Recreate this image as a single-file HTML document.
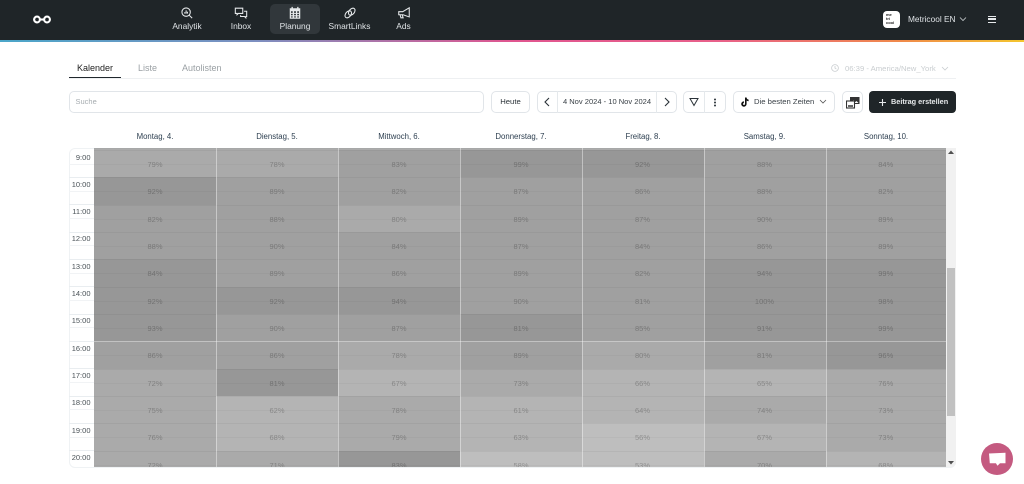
<!DOCTYPE html>
<html lang="de"><head><meta charset="utf-8"><title>Planung</title>
<style>
*{box-sizing:border-box}
html,body{margin:0;padding:0;width:1024px;height:484px;overflow:hidden;background:#fff;font-family:"Liberation Sans",sans-serif;color:#20272c}
.a{position:absolute}
#hd{left:0;top:0;width:1024px;height:40px;background:#1f2528}
#gr{left:0;top:40px;width:1024px;height:1.5px;background:linear-gradient(90deg,#4ba6c9 0%,#7d8fc0 25%,#e0558f 50%,#e8608a 70%,#f08a4a 88%,#f4c62e 100%)}
.nav{top:0;height:40px;text-align:center;color:#dfe3e6;font-size:8.4px}
.nav svg{position:absolute;top:5.5px;left:50%;margin-left:-7px;width:14px;height:14px;fill:none;stroke:#e6e9eb;stroke-width:1.2}
.nav span{position:absolute;left:-20px;right:-20px;top:21px;line-height:10px}
.btn{top:91px;height:21.5px;border:1px solid #e1e5e9;border-radius:5px;background:#fff;font-size:7.7px;line-height:19.5px;text-align:center;color:#2a3238}
.sep{top:91px;width:1px;height:21.5px;background:#e5e9ec}
.tab{top:63px;font-size:9px;line-height:11px}
.dh{top:131px;width:122px;text-align:center;font-size:7.8px;line-height:11px;color:#2d3f50}
.tm{left:69px;width:21.5px;text-align:right;font-size:7.5px;line-height:10px;color:#4a5257}
.tl{left:69px;width:25px;height:1px;background:#e9edf0}
.th{left:69px;width:25px;height:1px;background:#f1f3f5}
.col{top:148px;width:122px;height:319px;overflow:hidden}
.col i{position:absolute;left:0;width:100%;height:27.33px;font-style:normal;text-align:center;font-size:7.5px;line-height:27.33px;color:rgba(0,0,0,.25);border-top:1px solid rgba(0,0,0,.045);background-image:linear-gradient(rgba(0,0,0,.03),rgba(0,0,0,.03));background-size:100% 1px;background-position:0 13px;background-repeat:no-repeat}
.D{background-color:#979797}.M{background-color:#a0a0a0}.L{background-color:#aaa}.X{background-color:#b4b4b4}.Y{background-color:#bebebe}
.v{top:148px;width:1px;height:319px;background:rgba(255,255,255,.42)}
</style></head><body>
<div class="a" id="hd"></div><div class="a" id="gr"></div>
<svg class="a" style="left:32px;top:14px" width="20" height="11" viewBox="0 0 20 11" fill="none" stroke="#fff" stroke-width="2.1"><circle cx="5" cy="5.5" r="2.9"/><circle cx="15" cy="5.5" r="2.9"/><path d="M7.5 5.5h5"/></svg>
<div class="a" style="left:270px;top:4px;width:50px;height:30px;border-radius:5px;background:#31373b"></div>
<div class="a nav" style="left:172px;width:30px"><svg viewBox="0 0 16 16"><circle cx="7" cy="7" r="4.8"/><path d="M10.5 10.5l3.4 3.4M5.5 8.7V7M7 8.7V5M8.5 8.7V6.5"/></svg><span>Analytik</span></div>
<div class="a nav" style="left:231px;width:20px"><svg viewBox="0 0 16 16"><path d="M1.5 2.5h8.5v6H5l-1.5 1.5V8.5h-2zM11.5 6h3v6h-1v1.5L12 12H7.5v-1.5"/></svg><span>Inbox</span></div>
<div class="a nav" style="left:280px;width:30px"><svg viewBox="0 0 16 16" style="fill:#e6e9eb;stroke:none"><path d="M4 1h1.5v2H4zM10.5 1H12v2h-1.5zM2 2.5h12v12H2zM3.4 6v1.8h2V6zm3.5 0v1.8h2.2V6zm3.6 0v1.8h2.1V6zM3.4 9v1.6h2V9zm3.5 0v1.6h2.2V9zm3.6 0v1.6h2.1V9zM3.4 11.8v1.4h2v-1.4zm3.5 0v1.4h2.2v-1.4zm3.6 0v1.4h2.1v-1.4z"/></svg><span>Planung</span></div>
<div class="a nav" style="left:329px;width:41px"><svg viewBox="0 0 16 16"><ellipse cx="6" cy="9.5" rx="3" ry="4.6" transform="rotate(40 6 9.5)"/><ellipse cx="10" cy="6.5" rx="3" ry="4.6" transform="rotate(40 10 6.5)"/></svg><span>SmartLinks</span></div>
<div class="a nav" style="left:396px;width:15px"><svg viewBox="0 0 16 16"><path d="M14 2v10.5L7 10H2V6.5h4.5zM3.5 10l1 3.5H7L6 10.2"/></svg><span>Ads</span></div>
<div class="a" style="left:883px;top:10.5px;width:17px;height:17px;border-radius:4px;background:#fff;color:#222;font-size:4px;line-height:4.2px;padding:2.5px 0 0 3px;font-weight:bold">me<br>tri<br>cool</div>
<div class="a" style="left:908px;top:13px;font-size:8.3px;line-height:12px;color:#dfe3e6">Metricool EN</div>
<svg class="a" style="left:959px;top:16px" width="8" height="6" viewBox="0 0 8 6" fill="none" stroke="#c9ced1" stroke-width=".8"><path d="M1 1.5l3 3 3-3"/></svg>
<div class="a" style="left:988px;top:15.5px;width:8px;height:7px;border-top:1.3px solid #e6e9eb;border-bottom:1.3px solid #e6e9eb"></div>
<div class="a" style="left:988px;top:18.4px;width:8px;height:1.3px;background:#e6e9eb"></div>

<div class="a tab" style="left:77px;color:#222">Kalender</div>
<div class="a tab" style="left:138px;color:#9aa0a4">Liste</div>
<div class="a tab" style="left:182px;color:#9aa0a4">Autolisten</div>
<div class="a" style="left:69px;top:78px;width:887px;height:1px;background:#eef0f2"></div>
<div class="a" style="left:69px;top:76.5px;width:52px;height:1.5px;background:#20272c"></div>
<svg class="a" style="left:831px;top:64px" width="8" height="8" viewBox="0 0 8 8" fill="none" stroke="#c9cdd0" stroke-width=".8"><circle cx="4" cy="4" r="3.4"/><path d="M4 2v2.2l1.4.8"/></svg>
<div class="a" style="left:845px;top:63px;font-size:7.7px;line-height:11px;color:#c9cdd0">06:39 - America/New_York</div>
<svg class="a" style="left:941px;top:66px" width="8" height="5" viewBox="0 0 8 5" fill="none" stroke="#c9cdd0" stroke-width=".8"><path d="M1 1l3 3 3-3"/></svg>

<div class="a btn" style="left:69px;width:415px;text-align:left;padding-left:5.5px;color:#a5abaf;font-size:7.5px">Suche</div>
<div class="a btn" style="left:491px;width:39px">Heute</div>
<div class="a btn" style="left:537px;width:140px;color:#3a4147;font-size:7.55px">4 Nov 2024 - 10 Nov 2024</div>
<div class="a sep" style="left:557px"></div><div class="a sep" style="left:656px"></div>
<svg class="a" style="left:544px;top:97px" width="6" height="10" viewBox="0 0 6 10" fill="none" stroke="#2a3238" stroke-width="1.1"><path d="M5 1L1 5l4 4"/></svg>
<svg class="a" style="left:664px;top:97px" width="6" height="10" viewBox="0 0 6 10" fill="none" stroke="#2a3238" stroke-width="1.1"><path d="M1 1l4 4-4 4"/></svg>
<div class="a btn" style="left:683px;width:43px"></div><div class="a sep" style="left:704px"></div>
<svg class="a" style="left:689px;top:97px" width="10" height="10" viewBox="0 0 10 10" fill="none" stroke="#2a3238" stroke-width="1"><path d="M1 1.5h8L5 8.5z"/></svg>
<svg class="a" style="left:713px;top:98px" width="4" height="9" viewBox="0 0 4 9" fill="#2a3238"><circle cx="2" cy="1.5" r="1"/><circle cx="2" cy="4.5" r="1"/><circle cx="2" cy="7.5" r="1"/></svg>
<div class="a btn" style="left:733px;width:102px;text-align:left;padding-left:20px;color:#3a4147">Die besten Zeiten</div>
<svg class="a" style="left:740px;top:97px" width="9" height="10" viewBox="0 0 9 10"><path d="M5 .5h1.6c.1 1.2.9 2 2 2.1v1.6c-.8 0-1.5-.3-2-.7V7a2.7 2.7 0 1 1-2.7-2.7v1.7A1 1 0 1 0 5 7z" fill="#111"/></svg>
<svg class="a" style="left:819px;top:99px" width="8" height="6" viewBox="0 0 8 6" fill="none" stroke="#555" stroke-width=".8"><path d="M1 1l3 3 3-3"/></svg>
<div class="a btn" style="left:842px;width:21px"></div>
<svg class="a" style="left:846px;top:96px" width="14" height="13" viewBox="0 0 14 13"><rect x="4" y="1" width="9.5" height="7" fill="#333"/><path d="M5 7l2.5-3 2 2 1-1 2 2z" fill="#fff"/><rect x=".5" y="5" width="8" height="7" fill="#fff" stroke="#333" stroke-width="1.1"/><rect x="2" y="9" width="5" height="2" fill="#666"/></svg>
<div class="a" style="left:869px;top:91px;width:87px;height:21.5px;border-radius:4px;background:#1f2528;color:#e6e9eb;font-size:7.3px;line-height:21.5px;font-weight:bold;padding-left:22px">Beitrag erstellen</div>
<svg class="a" style="left:877.5px;top:98px" width="9" height="9" viewBox="0 0 9 9" stroke="#e6e9eb" stroke-width="1.1"><path d="M4.5 1v7M1 4.5h7"/></svg>

<div class="a dh" style="left:94px">Montag, 4.</div>
<div class="a dh" style="left:216px">Dienstag, 5.</div>
<div class="a dh" style="left:338px">Mittwoch, 6.</div>
<div class="a dh" style="left:460px">Donnerstag, 7.</div>
<div class="a dh" style="left:582px">Freitag, 8.</div>
<div class="a dh" style="left:703.5px">Samstag, 9.</div>
<div class="a dh" style="left:825px">Sonntag, 10.</div>

<div class="a" style="left:69px;top:147.5px;width:887px;height:320px;border:1px solid #eff2f4;border-radius:6px"></div>
<div class="a th" style="top:163.5px"></div><div class="a tl" style="top:177px"></div>
<div class="a th" style="top:191px"></div><div class="a tl" style="top:204.3px"></div>
<div class="a th" style="top:218px"></div><div class="a tl" style="top:231.7px"></div>
<div class="a th" style="top:245.3px"></div><div class="a tl" style="top:259px"></div>
<div class="a th" style="top:272.7px"></div><div class="a tl" style="top:286.3px"></div>
<div class="a th" style="top:300px"></div><div class="a tl" style="top:313.7px"></div>
<div class="a th" style="top:327.3px"></div><div class="a tl" style="top:341px"></div>
<div class="a th" style="top:354.7px"></div><div class="a tl" style="top:368.3px"></div>
<div class="a th" style="top:382px"></div><div class="a tl" style="top:395.7px"></div>
<div class="a th" style="top:409.3px"></div><div class="a tl" style="top:423px"></div>
<div class="a th" style="top:436.7px"></div><div class="a tl" style="top:450.3px"></div>

<div class="a tm" style="top:152.5px">9:00</div>
<div class="a tm" style="top:179.7px">10:00</div>
<div class="a tm" style="top:207px">11:00</div>
<div class="a tm" style="top:234.4px">12:00</div>
<div class="a tm" style="top:261.7px">13:00</div>
<div class="a tm" style="top:289px">14:00</div>
<div class="a tm" style="top:316.4px">15:00</div>
<div class="a tm" style="top:343.7px">16:00</div>
<div class="a tm" style="top:371px">17:00</div>
<div class="a tm" style="top:398.4px">18:00</div>
<div class="a tm" style="top:425.7px">19:00</div>
<div class="a tm" style="top:453px">20:00</div>

<div class="a col" style="left:94px">
<i class="L" style="top:2px">79%</i><i class="D" style="top:29.3px">92%</i><i class="M" style="top:56.7px">82%</i><i class="M" style="top:84px">88%</i><i class="D" style="top:111.3px">84%</i><i class="D" style="top:138.7px">92%</i><i class="D" style="top:166px">93%</i><i class="M" style="top:193.3px">86%</i><i class="L" style="top:220.7px">72%</i><i class="L" style="top:248px">75%</i><i class="L" style="top:275.3px">76%</i><i class="L" style="top:302.7px">72%</i></div>
<div class="a col" style="left:216px">
<i class="L" style="top:2px">78%</i><i class="M" style="top:29.3px">89%</i><i class="M" style="top:56.7px">88%</i><i class="M" style="top:84px">90%</i><i class="M" style="top:111.3px">89%</i><i class="D" style="top:138.7px">92%</i><i class="M" style="top:166px">90%</i><i class="M" style="top:193.3px">86%</i><i class="D" style="top:220.7px">81%</i><i class="X" style="top:248px">62%</i><i class="X" style="top:275.3px">68%</i><i class="L" style="top:302.7px">71%</i></div>
<div class="a col" style="left:338px">
<i class="M" style="top:2px">83%</i><i class="M" style="top:29.3px">82%</i><i class="L" style="top:56.7px">80%</i><i class="M" style="top:84px">84%</i><i class="M" style="top:111.3px">86%</i><i class="D" style="top:138.7px">94%</i><i class="M" style="top:166px">87%</i><i class="L" style="top:193.3px">78%</i><i class="X" style="top:220.7px">67%</i><i class="L" style="top:248px">78%</i><i class="L" style="top:275.3px">79%</i><i class="D" style="top:302.7px">83%</i></div>
<div class="a col" style="left:460px">
<i class="D" style="top:2px">99%</i><i class="M" style="top:29.3px">87%</i><i class="M" style="top:56.7px">89%</i><i class="M" style="top:84px">87%</i><i class="M" style="top:111.3px">89%</i><i class="M" style="top:138.7px">90%</i><i class="D" style="top:166px">81%</i><i class="M" style="top:193.3px">89%</i><i class="L" style="top:220.7px">73%</i><i class="X" style="top:248px">61%</i><i class="X" style="top:275.3px">63%</i><i class="Y" style="top:302.7px">58%</i></div>
<div class="a col" style="left:581.5px">
<i class="D" style="top:2px">92%</i><i class="M" style="top:29.3px">86%</i><i class="M" style="top:56.7px">87%</i><i class="M" style="top:84px">84%</i><i class="M" style="top:111.3px">82%</i><i class="M" style="top:138.7px">81%</i><i class="M" style="top:166px">85%</i><i class="L" style="top:193.3px">80%</i><i class="X" style="top:220.7px">66%</i><i class="X" style="top:248px">64%</i><i class="Y" style="top:275.3px">56%</i><i class="Y" style="top:302.7px">53%</i></div>
<div class="a col" style="left:703.5px">
<i class="M" style="top:2px">88%</i><i class="M" style="top:29.3px">88%</i><i class="M" style="top:56.7px">90%</i><i class="M" style="top:84px">86%</i><i class="D" style="top:111.3px">94%</i><i class="D" style="top:138.7px">100%</i><i class="D" style="top:166px">91%</i><i class="M" style="top:193.3px">81%</i><i class="X" style="top:220.7px">65%</i><i class="L" style="top:248px">74%</i><i class="X" style="top:275.3px">67%</i><i class="L" style="top:302.7px">70%</i></div>
<div class="a col" style="left:825.5px;width:120.5px">
<i class="M" style="top:2px">84%</i><i class="M" style="top:29.3px">82%</i><i class="M" style="top:56.7px">89%</i><i class="M" style="top:84px">89%</i><i class="D" style="top:111.3px">99%</i><i class="D" style="top:138.7px">98%</i><i class="D" style="top:166px">99%</i><i class="D" style="top:193.3px">96%</i><i class="L" style="top:220.7px">76%</i><i class="L" style="top:248px">73%</i><i class="L" style="top:275.3px">73%</i><i class="X" style="top:302.7px">68%</i></div>

<div class="a" style="left:94px;top:148px;width:852px;height:2px;background:#8f8f8f;opacity:.75"></div>
<div class="a" style="left:94px;top:341px;width:852px;height:1.2px;background:rgba(255,255,255,.4)"></div>
<div class="a v" style="left:216px"></div>
<div class="a v" style="left:338px"></div>
<div class="a v" style="left:460px"></div>
<div class="a v" style="left:581.5px"></div>
<div class="a v" style="left:703.5px"></div>
<div class="a v" style="left:825.5px"></div>

<div class="a" style="left:946px;top:148px;width:10px;height:319px;background:#f1f1f1;border-radius:0 0 5px 0"></div>
<div class="a" style="left:947px;top:267.5px;width:8px;height:148.5px;background:#c1c1c1"></div>
<svg class="a" style="left:948px;top:150px" width="6" height="4" viewBox="0 0 6 4"><path d="M3 .5L6 4H0z" fill="#505050"/></svg>
<svg class="a" style="left:948px;top:461px" width="6" height="4" viewBox="0 0 6 4"><path d="M3 3.5L6 0H0z" fill="#505050"/></svg>

<div class="a" style="left:981px;top:443px;width:32px;height:32px;border-radius:50%;background:#c45a80"></div>
<svg class="a" style="left:988px;top:452px" width="19" height="15" viewBox="0 0 19 15"><path d="M1 1.5l16.5-.8v10.5H12l-2.5 2.6-1.6-2.6H1.8z" fill="#fff"/></svg>
</body></html>
